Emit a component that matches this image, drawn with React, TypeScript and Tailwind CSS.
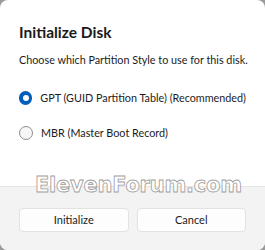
export default function App() {
  return (
    <div className="w-[265px] h-[250px] bg-[#9a9a9a]">
      <div
        className="relative w-[265px] h-[250px] rounded-[8px] overflow-hidden bg-white flex flex-col text-[#1b1b1b]"
        style={{ fontFamily: 'Lato, "Noto Sans", sans-serif' }}
      >
        <div className="flex-1 px-[19px] pt-[23px]">
          <h1 className="text-[15.5px] leading-[18px] font-bold whitespace-nowrap">Initialize Disk</h1>
          <p className="mt-[12px] text-[10.8px] leading-[14px] whitespace-nowrap">
            Choose which Partition Style to use for this disk.
          </p>
          <div className="mt-[24px] flex flex-col gap-[21px]">
            <label className="flex items-center gap-[8px] text-[10.8px] leading-[14px] whitespace-nowrap">
              <span className="w-[14px] h-[14px] rounded-full bg-[#005fb8] flex items-center justify-center">
                <span className="w-[6px] h-[6px] rounded-full bg-white" />
              </span>
              GPT (GUID Partition Table) (Recommended)
            </label>
            <label className="flex items-center gap-[8px] text-[10.8px] leading-[14px] whitespace-nowrap">
              <span className="w-[14px] h-[14px] rounded-full border border-[#8d8d8d] bg-[#f7f7f7]" />
              MBR (Master Boot Record)
            </label>
          </div>
        </div>
        <div className="h-[64px] bg-[#f3f3f3] border-t border-[#e5e5e5] px-[19px] pt-[21px] flex gap-[8px]">
          <button className="w-[110px] h-[24px] rounded-[4px] bg-[#fdfdfd] border border-[#e2e2e2] text-[11px]">
            Initialize
          </button>
          <button className="w-[110px] h-[24px] rounded-[4px] bg-[#fdfdfd] border border-[#e2e2e2] text-[11px]">
            Cancel
          </button>
        </div>
        <div
          className="absolute left-[35px] top-[172px] text-[21px] leading-[26px] font-bold tracking-[-0.25px] text-white [-webkit-text-stroke:0.8px_#9c9c9c] whitespace-nowrap"
          style={{ fontFamily: '"DejaVu Sans", sans-serif' }}
        >
          ElevenForum.com
        </div>
      </div>
    </div>
  );
}
